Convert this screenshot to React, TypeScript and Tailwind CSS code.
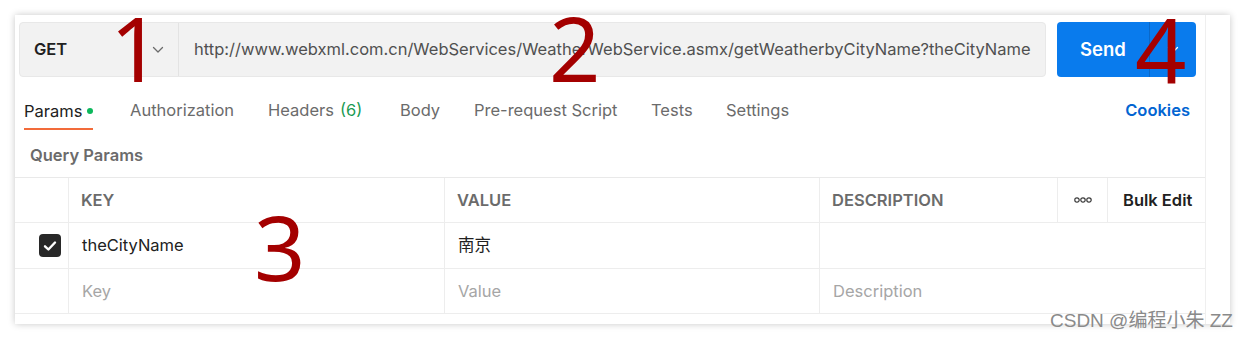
import React from "react";

const font = { fontFamily: "Inter, 'Noto Sans', sans-serif" };

function Chevron({ className }: { className?: string }) {
  return (
    <svg className={className} width="12" height="8" viewBox="0 0 12 8" fill="none">
      <path d="M1.5 1.5 L6 6 L10.5 1.5" stroke="currentColor" strokeWidth="1.3" strokeLinecap="round" strokeLinejoin="round" />
    </svg>
  );
}

export default function App() {
  const tabs = [
    { label: "Authorization", w: "w-[138px]" },
    { label: "Headers", extra: "(6)", w: "w-[132px]" },
    { label: "Body", w: "w-[74px]" },
    { label: "Pre-request Script", w: "w-[177px]" },
    { label: "Tests", w: "w-[75px]" },
    { label: "Settings", w: "w-[80px]" },
  ];
  return (
    <div className="relative w-[1245px] h-[339px] bg-white overflow-hidden pt-[15px] pl-[15px]" style={font}>
      <div className="w-[1215px] h-[309px] bg-white shadow-[0_0_7px_rgba(0,0,0,0.22)] flex">
        <div className="w-[1191px] h-full border-r border-[#efefef] flex flex-col">
          {/* request bar */}
          <div className="flex items-center h-[55px] mt-[7px] pl-[4px]">
            <div className="flex h-[55px] w-[1027px] rounded-[4px] bg-[#f2f2f2] border border-[#e8e8e8]">
              <div className="w-[159px] shrink-0 flex items-center justify-between pl-[14px] pr-[14px] border-r border-[#e3e3e3]">
                <span className="text-[16.5px] font-semibold text-[#212121]">GET</span>
                <Chevron className="text-[#6b6b6b]" />
              </div>
              <div className="flex-1 flex items-center pl-[15px] overflow-hidden whitespace-nowrap">
                <span className="text-[16.5px] text-[#505050]">
                  http://www.webxml.com.cn/WebServices/WeatherWebService.asmx/getWeatherbyCityName?theCityName
                </span>
              </div>
            </div>
            <div className="ml-[11px] w-[139px] h-[55px] rounded-[4px] bg-[#097bed] flex text-white">
              <div className="w-[93px] flex items-center justify-center border-r border-[#0a68c9] text-[18.5px] font-semibold">
                Send
              </div>
              <div className="flex-1 flex items-center justify-center">
                <Chevron className="text-white" />
              </div>
            </div>
          </div>
          {/* tabs */}
          <div className="flex h-[55px] pl-[9px] pr-[15px] text-[16.5px] text-[#6b6b6b]">
            <div className="w-[106px] flex items-start pt-[14px] h-full">
              <div className="relative h-[40px] flex items-center text-[#212121]">
                Params
                <span className="ml-[5px] w-[6px] h-[6px] rounded-full bg-[#0cb85c]" />
                <div className="absolute left-0 right-0 bottom-[1px] h-[2px] bg-[#f26b3a]" />
              </div>
            </div>
            {tabs.map((t) => (
              <div key={t.label} className={`${t.w} flex items-start pt-[14px] h-full whitespace-nowrap`}>
                <div className="h-[38px] flex items-center">
                  {t.label}
                  {t.extra && <span className="ml-[6px] text-[#1a9a52]">{t.extra}</span>}
                </div>
              </div>
            ))}
            <div className="ml-auto flex items-start pt-[14px] h-full">
              <div className="h-[38px] flex items-center text-[#0265d2] font-semibold">Cookies</div>
            </div>
          </div>
          {/* query params label */}
          <div className="h-[45px] flex items-center pl-[15px] pt-[1px] text-[16.5px] font-semibold text-[#6b6b6b]">Query Params</div>
          {/* table */}
          <div className="grid grid-cols-[53px_376px_375px_238px_50px_98px] border-t border-[#e9e9e9] text-[16.5px]">
            {/* header */}
            <div className="h-[45px] border-b border-[#ededed]" />
            <div className="h-[45px] border-b border-l border-[#ededed] flex items-center pl-[12px] font-semibold text-[#6b6b6b]">KEY</div>
            <div className="h-[45px] border-b border-l border-[#ededed] flex items-center pl-[12px] font-semibold text-[#6b6b6b]">VALUE</div>
            <div className="h-[45px] border-b border-l border-[#ededed] flex items-center pl-[12px] font-semibold text-[#6b6b6b]">DESCRIPTION</div>
            <div className="h-[45px] border-b border-l border-[#ededed] flex items-center justify-center">
              <svg width="18" height="6" viewBox="0 0 18 6" fill="none">
                <circle cx="3" cy="3" r="2.2" stroke="#3a3a3a" strokeWidth="1.2" />
                <circle cx="9" cy="3" r="2.2" stroke="#3a3a3a" strokeWidth="1.2" />
                <circle cx="15" cy="3" r="2.2" stroke="#3a3a3a" strokeWidth="1.2" />
              </svg>
            </div>
            <div className="h-[45px] border-b border-l border-[#ededed] flex items-center pl-[15px] font-semibold text-[#212121] whitespace-nowrap">Bulk Edit</div>
            {/* row 1 */}
            <div className="h-[46px] border-b border-[#ededed] flex items-center justify-end pr-[7px]">
              <div className="w-[22px] h-[23px] rounded-[4px] bg-[#282828] flex items-center justify-center">
                <svg width="14" height="12" viewBox="0 0 14 12" fill="none">
                  <path d="M2 6.3 L5.4 9.5 L12 2.5" stroke="white" strokeWidth="2.4" strokeLinecap="round" strokeLinejoin="round" />
                </svg>
              </div>
            </div>
            <div className="h-[46px] border-b border-l border-[#ededed] flex items-center pl-[13px] text-[#212121]">theCityName</div>
            <div className="h-[46px] border-b border-l border-[#ededed] flex items-center pl-[13px] text-[#212121]" style={{ fontFamily: "Inter, 'Noto Sans CJK SC', sans-serif" }}>南京</div>
            <div className="col-span-3 h-[46px] border-b border-l border-[#ededed]" />
            {/* row 2 */}
            <div className="h-[45px] border-b border-[#ededed]" />
            <div className="h-[45px] border-b border-l border-[#ededed] flex items-center pl-[13px] text-[#a6a6a6]">Key</div>
            <div className="h-[45px] border-b border-l border-[#ededed] flex items-center pl-[13px] text-[#a6a6a6]">Value</div>
            <div className="col-span-3 h-[45px] border-b border-l border-[#ededed] flex items-center pl-[13px] text-[#a6a6a6]">Description</div>
          </div>
        </div>
      </div>

      {/* red annotations */}
      <span className="absolute left-[110px] top-[2px] text-[90px] leading-none text-[#a40000]" style={{ fontFamily: "'Noto Sans', sans-serif" }}>1</span>
      <span className="absolute left-[549px] top-[2px] text-[90px] leading-none text-[#a40000]" style={{ fontFamily: "'Noto Sans', sans-serif" }}>2</span>
      <span className="absolute left-[254px] top-[201px] text-[90px] leading-none text-[#a40000]" style={{ fontFamily: "'Noto Sans', sans-serif" }}>3</span>
      <span className="absolute left-[1135px] top-[4px] text-[90px] leading-none text-[#a40000]" style={{ fontFamily: "'Noto Sans', sans-serif" }}>4</span>

      {/* watermark */}
      <span
        className="absolute left-[1050px] top-[311px] text-[19px] leading-none text-[#8a8a8a] whitespace-nowrap"
        style={{ fontFamily: "'Liberation Sans', 'Noto Sans CJK SC', sans-serif" }}
      >
        CSDN @编程小朱 ZZ
      </span>
    </div>
  );
}
